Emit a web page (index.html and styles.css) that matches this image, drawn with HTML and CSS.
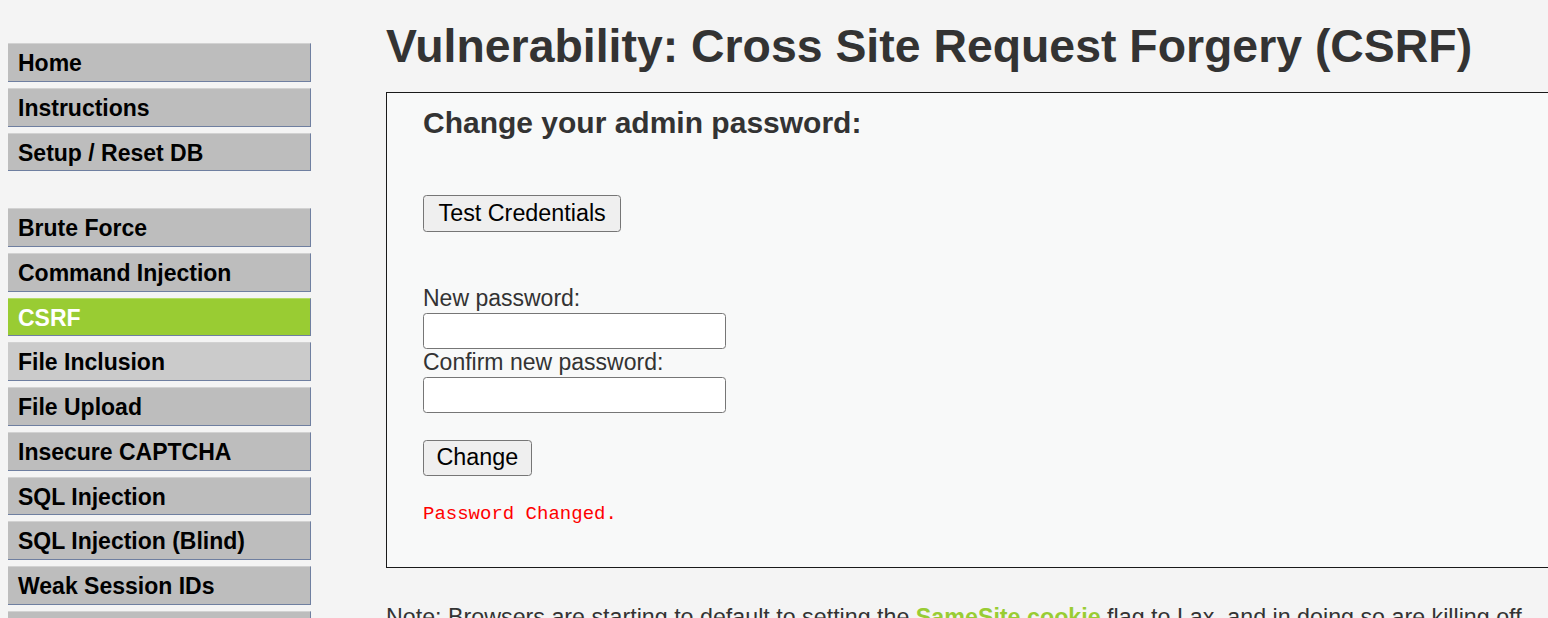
FILE: index.html
```html
<!DOCTYPE html>
<html lang="en">
<head>
<meta charset="utf-8">
<title>Vulnerability: Cross Site Request Forgery (CSRF)</title>
<link rel="stylesheet" href="styles.css">
</head>
<body>
<div class="page">
  <nav class="menu">
    <ul class="menu-group">
      <li><a class="menu-item" href="#">Home</a></li>
      <li><a class="menu-item" href="#">Instructions</a></li>
      <li><a class="menu-item" href="#">Setup / Reset DB</a></li>
    </ul>
    <ul class="menu-group menu-group-second">
      <li><a class="menu-item" href="#">Brute Force</a></li>
      <li><a class="menu-item" href="#">Command Injection</a></li>
      <li><a class="menu-item selected" href="#">CSRF</a></li>
      <li><a class="menu-item hover" href="#">File Inclusion</a></li>
      <li><a class="menu-item" href="#">File Upload</a></li>
      <li><a class="menu-item" href="#">Insecure CAPTCHA</a></li>
      <li><a class="menu-item" href="#">SQL Injection</a></li>
      <li><a class="menu-item" href="#">SQL Injection (Blind)</a></li>
      <li><a class="menu-item" href="#">Weak Session IDs</a></li>
      <li><a class="menu-item" href="#">XSS (DOM)</a></li>
    </ul>
  </nav>
  <main class="body-content">
    <h1 class="title">Vulnerability: Cross Site Request Forgery (CSRF)</h1>
    <div class="code-area">
      <h3 class="form-title">Change your admin password:</h3>
      <button class="btn btn-test" type="button">Test Credentials</button>
      <form class="pw-form">
        <label class="field-label">New password:</label>
        <input class="field-input" type="password">
        <label class="field-label">Confirm new password:</label>
        <input class="field-input field-input-second" type="password">
        <button class="btn btn-change" type="button">Change</button>
      </form>
      <pre class="result">Password Changed.</pre>
    </div>
    <p class="note">Note: Browsers are starting to default to setting the <a class="note-link" href="#">SameSite cookie</a> flag to Lax, and in doing so are killing off some types of CSRF attacks.</p>
  </main>
</div>
</body>
</html>
```

FILE: styles.css
```css
html, body {
  margin: 0;
  padding: 0;
  overflow: hidden;
  background: #f4f4f4;
}

body {
  font-family: "Liberation Sans", Arial, sans-serif;
  color: #333333;
}

.page {
  display: flex;
  align-items: flex-start;
  width: 1548px;
  height: 618px;
  overflow: hidden;
}

.menu {
  flex: 0 0 303px;
  margin-left: 8px;
  padding-top: 43px;
}

.menu-group {
  list-style: none;
  margin: 0;
  padding: 0;
}

.menu-group-second {
  margin-top: 36.75px;
}

.menu-group li {
  margin: 0 0 6px 0;
}

.menu-item {
  display: block;
  height: 36.75px;
  line-height: 38.5px;
  overflow: hidden;
  padding-left: 10px;
  background: #bdbdbd;
  border-top: 1px solid #d2d2d2;
  border-bottom: 1px solid #6f7fa0;
  border-right: 1px solid #6f7fa0;
  color: #000000;
  font-size: 23px;
  font-weight: bold;
  text-decoration: none;
  white-space: nowrap;
}

.menu-item.selected {
  background: #99cc33;
  color: #ffffff;
  border-top-color: #b4dc66;
}

.menu-item.hover {
  background: #cbcbcb;
}

.body-content {
  flex: 0 0 auto;
  margin-left: 75px;
  padding-top: 20.3px;
  width: 1250px;
}

.title {
  margin: 0;
  font-size: 46.4px;
  line-height: 53px;
  font-weight: bold;
  color: #333333;
  white-space: nowrap;
}

.code-area {
  margin-top: 18.7px;
  background: #f8f9f9;
  border: 1px solid #1a1a1a;
  padding: 13px 36px 41px 36px;
}

.form-title {
  margin: 0;
  font-size: 30px;
  line-height: 34px;
  font-weight: bold;
  color: #333333;
}

.btn {
  display: block;
  font-family: "Liberation Sans", Arial, sans-serif;
  font-size: 23.33px;
  color: #000000;
  background: #efefef;
  border: 1px solid #767676;
  border-radius: 3.5px;
  margin: 0;
}

.btn-test {
  height: 37px;
  padding: 0 14.5px;
  margin-top: 55.3px;
}

.pw-form {
  display: flex;
  flex-direction: column;
  align-items: flex-start;
  margin: 52.9px 0 0 0;
}

.field-label {
  display: block;
  font-size: 23px;
  line-height: 27px;
  color: #333333;
}

.field-input {
  display: block;
  box-sizing: border-box;
  width: 303px;
  height: 35.5px;
  margin: 1px 0 0 0;
  border: 1px solid #767676;
  border-radius: 3.5px;
  background: #ffffff;
  padding: 0 4px;
}

.field-input-second {
  height: 36px;
}

.btn-change {
  height: 36px;
  padding: 0 12.5px;
  margin-top: 27px;
}

.result {
  margin: 27.4px 0 0 0;
  font-family: "Liberation Mono", "Courier New", monospace;
  font-size: 19px;
  line-height: 23px;
  color: #ff0000;
}

.note {
  margin: 35.5px 0 0 0;
  width: 1150px;
  font-size: 23.25px;
  line-height: 27px;
  color: #333333;
}

.note-link {
  color: #99cc33;
  font-weight: bold;
  text-decoration: none;
}
```
